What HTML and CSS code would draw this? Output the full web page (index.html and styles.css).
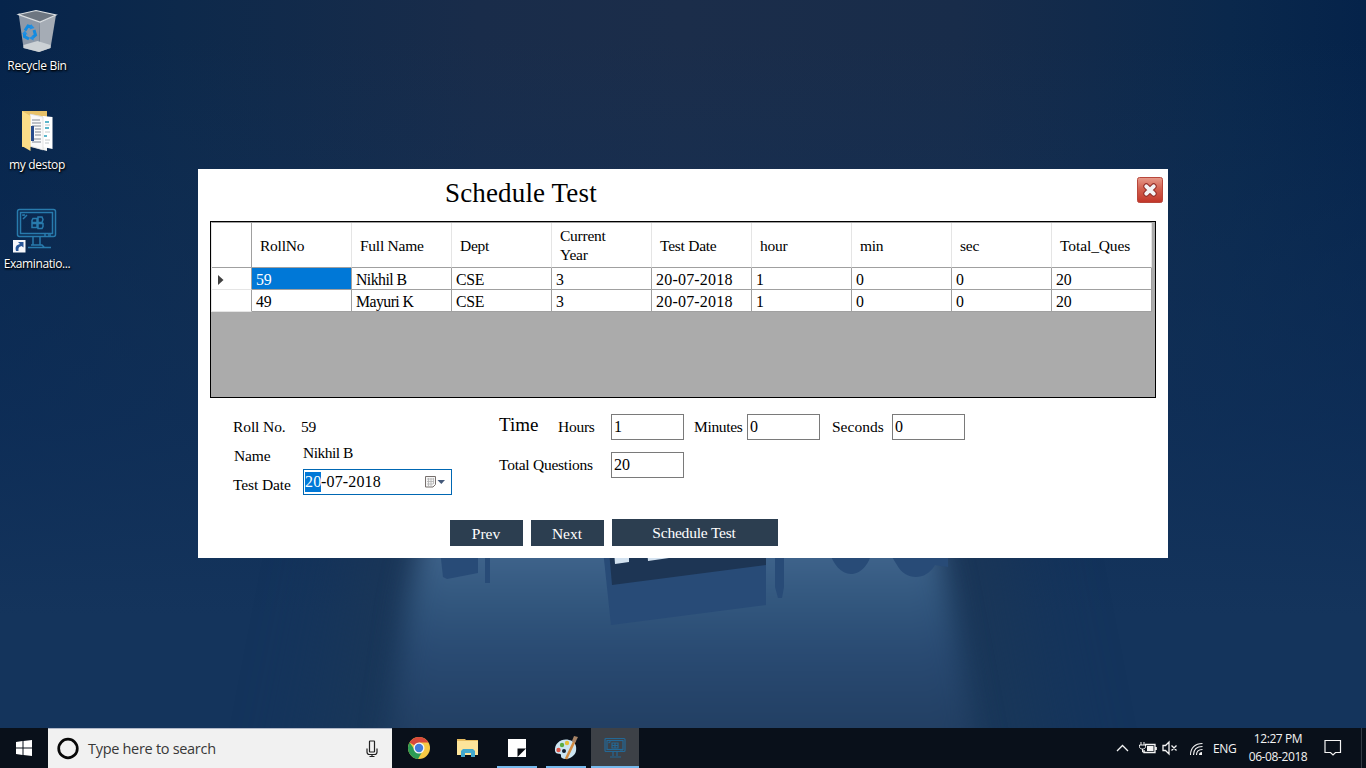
FILE: index.html
```html
<!DOCTYPE html>
<html lang="en">
<head>
<meta charset="utf-8">
<title>Schedule Test</title>
<link rel="stylesheet" href="styles.css">
</head>
<body>
<div class="desktop">
  <svg class="wallpaper" viewBox="0 0 1366 768">
    <defs>
      <linearGradient id="wide" x1="0" y1="0" x2="1" y2="0"><stop offset="0" stop-color="#06244b"/><stop offset=".13" stop-color="#0d294b"/><stop offset=".35" stop-color="#192c4a"/><stop offset=".5" stop-color="#1b2d4a"/><stop offset=".7" stop-color="#182c4a"/><stop offset=".9" stop-color="#0a284c"/><stop offset="1" stop-color="#05234a"/></linearGradient>
      <linearGradient id="low" x1="0" y1="0" x2="0" y2="1"><stop offset=".05" stop-color="#12335b" stop-opacity="0"/><stop offset=".55" stop-color="#10305a" stop-opacity=".75"/><stop offset=".8" stop-color="#14345c"/></linearGradient>
      <linearGradient id="beam" x1="0" y1="540" x2="0" y2="728" gradientUnits="userSpaceOnUse"><stop offset="0" stop-color="#43678f"/><stop offset=".3" stop-color="#33587f"/><stop offset=".6" stop-color="#294a72"/><stop offset="1" stop-color="#223f63"/></linearGradient>
      <linearGradient id="dark" x1="0" y1="540" x2="0" y2="728" gradientUnits="userSpaceOnUse"><stop offset="0" stop-color="#1b3657"/><stop offset="1" stop-color="#193759"/></linearGradient>
      <filter id="soft" x="-30%" y="-30%" width="160%" height="160%" color-interpolation-filters="sRGB"><feGaussianBlur stdDeviation="14"/></filter>
      <filter id="softer" x="-30%" y="-60%" width="160%" height="220%" color-interpolation-filters="sRGB"><feGaussianBlur stdDeviation="38"/></filter>
    </defs>
    <rect width="1366" height="768" fill="url(#wide)"/>
    <rect width="1366" height="768" fill="url(#low)"/>
    <path d="M370 480H996L1070 860H296Z" fill="url(#dark)" filter="url(#softer)"/>
    <path d="M438 470H924L950 600L994 830H376L408 600Z" fill="url(#beam)" filter="url(#soft)"/>
    <g fill="#284b77">
      <path d="M440 550h38v23l-31 6-4-2z"/>
      <path d="M485 550h5v33h-5zM775 550h9v37l-2 11h-4l-3-11zM828 550h44c-2 14-11 24-21 24s-17-9-23-24zM890 550h58v17l-13-2c-10 17-30 15-38 0-3-5-6-9-7-15z"/>
      <path d="M603 550h163v55l-155 20z"/>
    </g>
    <path d="M609 550h157v15l-154 20z" fill="#1d3554"/>
    <path d="M614 550h15v12l-14 2zM647 550h22v8l-21 3z" fill="#d3e2f0"/>
  </svg>

  <div class="shortcut recycle">
    <svg width="48" height="48" viewBox="0 0 48 48">
      <path d="M5.500 5l5 35 15.500 4 1-30z" fill="#8e99a8"/><path d="M27 14l16-7-5.500 33-11.500 4z" fill="#a5acb5"/>
      <path d="M5.500 6.500L23 2.500 43 7 27 14z" fill="#6d7681" stroke="#dce0e3" stroke-width="1.200"/>
      <path d="M10.500 37l14-4 13 4v3L26 44l-15.500-4z" fill="#ccd1d5"/>
      <g fill="none" stroke="#138be0" stroke-width="3"><path d="M12 22.500l3-4.500 3.500 1"/><path d="M21 22l1.500 5-3 2.500"/><path d="M16 31l-4.500-2.500V26"/></g>
      <path d="M18 16l3.500 4-5 1.500zM20.500 27.500L16 30l4.500 2.500zM9 26l3-3.500 2.500 4z" fill="#238fe2"/>
    </svg>
    <span>Recycle Bin</span>
  </div>
  <div class="shortcut folder">
    <svg width="48" height="48" viewBox="0 0 48 48">
      <path d="M9 4h25v36H9z" fill="#e8c269"/><path d="M17 7l17 3v34l-16-4z" fill="#f5f5f2"/>
      <path d="M30 9l9.500 1v32l-9.500-2z" fill="#fff"/><path d="M17 7l13 3v33l-13-4z" fill="#fafafa" stroke="#c8c8c8" stroke-width=".5"/>
      <path d="M19 13h8M19 16h9M19 19h9M22 22h6M22 25h6M22 28h6M19 32h9M19 35h9" stroke="#808894"/>
      <path d="M32 15h4M32 21h4M31 29h3" stroke="#299eba" stroke-width="1.400"/><path d="M32 18h5M32 25h5M32 33h5M32 36h4" stroke="#c2c8ca"/>
      <path d="M18 19h3v15h-3z" fill="#274b8d"/><path d="M9 4l8.500 5v35L9 39z" fill="#fbdd88"/>
    </svg>
    <span>my destop</span>
  </div>
  <div class="shortcut exam">
    <svg width="48" height="48" viewBox="0 0 48 48">
      <g fill="none" stroke="#287bad" stroke-width="1.500">
        <rect x="4.500" y="3.500" width="38" height="27" rx="2"/><rect x="7.500" y="6.500" width="32" height="21"/>
        <path d="M20 31v8M27 31v8M18 39h11l2 2M15 41.500h23M31 29h2M35 29h3M10 13l4-4M10 10V9h2"/>
        <path d="M20 12.500h4v4h-5v-2zM25 11h4l1 2.500-1 3h-4zM19 17.500h5v4h-5zM25 17.500h5v3l-1 2h-4z"/>
      </g>
      <path d="M0 34h12.500v12.500H0z" fill="#f7f8fb"/><path d="M3 45c-1-4 0-6 4-7l-2-2h5.500v5.500l-2-1.500C5.500 41 5.500 42 5.500 45z" fill="#285697"/>
    </svg>
    <span>Examinatio...</span>
  </div>

  <main class="window">
    <header class="titlebar">
      <h1>Schedule Test</h1>
      <svg class="close" width="28" height="28" viewBox="0 0 28 28">
        <defs><linearGradient id="red" x1="0" y1="0" x2="0" y2="1"><stop offset="0" stop-color="#e69a8b"/><stop offset=".45" stop-color="#d2604f"/><stop offset="1" stop-color="#c23528"/></linearGradient></defs>
        <rect x="1.500" y="1.500" width="25" height="25" rx="2" fill="url(#red)" stroke="#b8473b"/>
        <path d="M10.300 10.300l7.400 7.400M17.700 10.300l-7.400 7.400" stroke="#922e29" stroke-width="6" stroke-linecap="round"/>
        <path d="M10.300 10.300l7.400 7.400M17.700 10.300l-7.400 7.400" stroke="#f3f3f5" stroke-width="4" stroke-linecap="round"/>
      </svg>
    </header>

    <div class="datagrid">
      <table>
        <thead><tr><th class="rowhead"></th><th>RollNo</th><th>Full Name</th><th>Dept</th><th>Current<br>Year</th><th>Test Date</th><th>hour</th><th>min</th><th>sec</th><th class="ques">Total_Ques</th></tr></thead>
        <tbody>
          <tr><td class="rowhead"><svg width="6" height="10" viewBox="0 0 6 10"><path d="M0 0l5.500 5L0 10z" fill="#404040"/></svg></td><td class="selected">59</td><td class="word">Nikhil B</td><td>CSE</td><td>3</td><td class="date">20-07-2018</td><td>1</td><td>0</td><td>0</td><td>20</td></tr>
          <tr><td class="rowhead"></td><td>49</td><td class="word">Mayuri K</td><td>CSE</td><td>3</td><td class="date">20-07-2018</td><td>1</td><td>0</td><td>0</td><td>20</td></tr>
        </tbody>
      </table>
    </div>

    <div class="form">
      <section class="person">
        <div class="pair"><label>Roll No.</label><span class="roll">59</span></div>
        <div class="pair name"><label>Name</label><span class="fullname">Nikhil B</span></div>
        <div class="pair test"><label>Test Date</label>
          <div class="picker"><mark>20</mark><span>-07-2018</span>
            <svg width="22" height="14" viewBox="0 0 22 14"><path d="M1.500 1.500h10v8l-2.500 2.500H1.500z" fill="#f6f6f6" stroke="#77706d"/><path d="M3 4h7M3 6.500h7M3 9h6M4.500 3v8M7 3v8M9.500 3v6" stroke="#b3b3b3" stroke-width=".8"/><path d="M13.500 5h7.500l-3.700 4z" fill="#44597a"/></svg>
          </div>
        </div>
      </section>
      <section class="timing">
        <div class="times"><strong>Time</strong><label class="hours">Hours</label><div class="box">1</div><label class="minutes">Minutes</label><div class="box">0</div><label class="seconds">Seconds</label><div class="box">0</div></div>
        <div class="total"><label>Total Questions</label><div class="box">20</div></div>
      </section>
    </div>
    <div class="buttons"><button>Prev</button><button>Next</button><button class="wide">Schedule Test</button></div>
  </main>

  <footer class="taskbar">
    <div class="start"><svg width="16" height="16" viewBox="0 0 16 16"><path d="M0 2l6.500-1v6.500H0zM7.500 1L16 0v7.500H7.500zM0 8.500h6.500V15L0 14zM7.500 8.500H16V16l-8.500-1z" fill="#fff"/></svg></div>
    <div class="search">
      <svg width="24" height="24" viewBox="0 0 24 24"><circle cx="12" cy="11.500" r="9.300" fill="none" stroke="#080808" stroke-width="2.700"/></svg>
      <span>Type here to search</span>
      <svg class="mic" width="14" height="18" viewBox="0 0 14 18" fill="none" stroke="#222" stroke-width="1.200"><rect x="4.500" y="1" width="5" height="11" rx=".5"/><path d="M2 8.500V12c0 1.500 1 2.500 2.500 2.500h5c1.500 0 2.500-1 2.500-2.500V8.500M7 14.500v2M4.500 16.500h5"/></svg>
    </div>
    <nav class="apps">
      <div class="app"><svg width="24" height="24" viewBox="0 0 24 24"><circle cx="12" cy="12" r="11" fill="#f6c944"/><path d="M12 12L2.500 6.500A11 11 0 0 1 21.500 6.500H12z" fill="#d8493b"/><path d="M2.500 6.500A11 11 0 0 0 11 23l5-8.500-8-.5z" fill="#2c9b55"/><circle cx="12" cy="12" r="5.500" fill="#f5f5f5"/><circle cx="12" cy="12" r="4.200" fill="#427bdc"/></svg></div>
      <div class="app"><svg width="24" height="24" viewBox="0 0 24 24"><path d="M1 3h8l1 1h12v15H1z" fill="#e6bc60"/><path d="M1 5h21v14H1z" fill="#fde49a"/><path d="M5 21v-6l2-2h10l2 2v6h-4v-4H9v4z" fill="#41a8ce"/></svg></div>
      <div class="app open"><svg width="24" height="24" viewBox="0 0 24 24"><path d="M3 3h18v18H3z" fill="#fff"/><path d="M12.500 12.500H21L12.500 21z" fill="#080c13"/></svg></div>
      <div class="app open"><svg width="26" height="26" viewBox="0 0 26 26"><path d="M2 16C1 8 9 3 16 5c6 1 8 6 7 11-1 6-10 10-14 7-2-1 0-4-2-4-1-1-4 1-5-3z" fill="#cce5f2"/><circle cx="5.500" cy="15" r="2.200" fill="#dc5547"/><circle cx="9" cy="10" r="2.200" fill="#5cad42"/><circle cx="14" cy="8" r="2.200" fill="#e6bf39"/><circle cx="11" cy="16" r="2" fill="#101c2c"/><path d="M13 24l9-19" stroke="#d28b41" stroke-width="2.600"/><path d="M19 6l2-5 4 1-3 6z" fill="#a78366"/></svg></div>
      <div class="app open active"><svg width="24" height="24" viewBox="0 0 24 24" fill="none" stroke="#236896" stroke-width="1.200"><rect x="2" y="2.500" width="20" height="13" rx="1"/><rect x="4" y="4.500" width="16" height="9"/><path d="M10 16v4M14 16v4M7 21h11M9 7h6v5H9zM12 7v5M9 9.500h6M5.500 7l2-1.500M17 14h3"/></svg></div>
    </nav>
    <div class="tray">
      <svg width="92" height="20" viewBox="0 0 92 20" fill="none" stroke="#f4f4f4" stroke-width="1.300">
        <path d="M1 13l5.500-5.500L12 13"/>
        <path d="M29 6.500h10v8H28v-2.500M40.200 9v3"/><path d="M31 8h6.500v5H31z" fill="#f4f4f4" stroke="none"/><path d="M25 4v3M28 4v3M23.500 7h6v1.500c0 2-1.500 2.500-3 2.500s-3-.5-3-2.500zM26.500 11v3h2" stroke-width="1"/>
        <path d="M47 7.500h2.500L53 4v12l-3.500-3.500H47zM55.500 7.500l5 5M60.500 7.500l-5 5"/>
        <path d="M74.500 17C74.500 10 79 5.500 86.500 5.500M77.500 17c0-5.500 3.500-8.500 9-8.500M80.500 17c0-3.500 2-5.500 6-5.500" stroke-width="1.100"/><path d="M83 17c0-2 1-3 3-3v3z" fill="#f4f4f4" stroke="none"/>
      </svg>
      <span class="lang">ENG</span>
      <div class="clock"><span>12:27 PM</span><span>06-08-2018</span></div>
      <svg class="notice" width="18" height="18" viewBox="0 0 18 18" fill="none" stroke="#f4f4f4" stroke-width="1.200"><path d="M1 1.500h15.500v12h-5L9 16l-2.500-2.500H1z"/></svg>
    </div>
  </footer>
</div>
</body>
</html>
```

FILE: styles.css
```css
* { box-sizing: border-box; }
body { margin: 0; overflow: hidden; font-family: "Liberation Serif", serif; }
svg { display: block; flex: none; }
.desktop { position: relative; width: 1366px; height: 768px; display: flex; flex-direction: column; justify-content: flex-end; overflow: hidden; }
.wallpaper { position: absolute; inset: 0; width: 1366px; height: 768px; }

/* Desktop shortcuts */
.shortcut { position: absolute; left: 0; width: 74px; display: flex; flex-direction: column; align-items: center; gap: 1px; color: #fff; font: 12px/18px "Open Sans", sans-serif; text-shadow: 1px 1px 2px #000, 0 1px 2px #000; white-space: nowrap; letter-spacing: -.3px; }
.recycle { top: 8px; }
.folder { top: 107px; }
.exam { top: 206px; }
.exam span { letter-spacing: -.4px; }

/* Application window */
.window { position: absolute; left: 198px; top: 169px; width: 970px; height: 389px; background: #fff; color: #000; font-size: 15.5px; letter-spacing: -.25px; display: flex; flex-direction: column; }
.titlebar { height: 52px; flex: none; display: flex; justify-content: space-between; padding: 7px 4px 0 247px; }
h1 { margin: 0; font-size: 27px; line-height: 34px; font-weight: 400; letter-spacing: .15px; }
.datagrid { flex: none; margin: 0 12px; height: 177px; border: 1px solid #000; background: #ababab; }
table { table-layout: fixed; width: 941px; border-spacing: 0; border-left: 1px solid #e5e5e5; border-top: 1px solid #a0a0a0; }
th, td { width: 100px; padding: 2px 0 0 4px; text-align: left; font-weight: 400; background: #fff; border-right: 1px solid #a0a0a0; border-bottom: 1px solid #a0a0a0; }
th { height: 45px; line-height: 19px; padding: 0 0 0 8px; border-right-color: #e5e5e5; }
th.ques { letter-spacing: -.1px; }
td { height: 22px; line-height: 19px; font-size: 15.8px; }
th.rowhead, td.rowhead { width: 40px; padding: 2px 0 0 6px; border-right-color: #a0a0a0; }
td.rowhead { border-bottom-color: #e5e5e5; }
td.selected { background: #0078d7; color: #fff; }
td.date { font-size: 16px; letter-spacing: .2px; }
td.word { letter-spacing: -.55px; }

/* Student and timing fields */
.form { flex: none; display: flex; height: 121px; }
.person { width: 301px; padding: 19px 0 0 35px; }
.pair { display: flex; align-items: flex-start; height: 29px; line-height: 20px; }
.pair label { width: 70px; white-space: nowrap; letter-spacing: -.1px; }
.roll { margin-left: -2px; }
.name .fullname { margin-top: -3px; letter-spacing: -.5px; }
.name { padding-left: 1px; }
.name label { width: 69px; }
.picker { margin-top: -6px; width: 149px; height: 26px; border: 1px solid #0067b3; display: flex; align-items: center; padding: 0 5px 0 1px; font-size: 16px; letter-spacing: .15px; }
.picker mark { background: #0078d7; color: #fff; width: 16px; line-height: 20px; }
.picker svg { margin-left: auto; }
.timing { padding-top: 16px; }
.times, .total { display: flex; align-items: center; height: 26px; white-space: nowrap; }
.total { margin-top: 12px; }
.times strong { font-weight: 400; font-size: 19px; letter-spacing: 0; width: 59px; margin-top: -4px; }
.hours { width: 53px; }
.minutes { width: 63px; padding-left: 10px; letter-spacing: -.35px; }
.seconds { width: 72px; padding-left: 12px; letter-spacing: 0; }
.total label { width: 112px; letter-spacing: -.25px; }
.box { width: 73px; height: 26px; border: 1px solid #7a7a7a; padding-left: 2px; line-height: 24px; font-size: 16px; letter-spacing: 0; }
.buttons { display: flex; align-items: flex-end; gap: 8px; padding-left: 252px; height: 27px; }
button { width: 73px; height: 26px; padding: 1px 1px 0 0; border: 0; background: #2c3e50; color: #fff; font: 15.5px/25px "Liberation Serif", serif; }
button.wide { width: 166px; height: 27px; padding: 0 2px 0 0; letter-spacing: -.2px; }

/* Taskbar */
.taskbar { position: relative; height: 40px; background: #09101a; color: #f4f4f4; font-family: "Open Sans", sans-serif; display: flex; align-items: stretch; }
.start { width: 48px; display: grid; place-items: center; }
.search { width: 344px; background: #f1f1f1; border-top: 1px solid #b1b8c8; display: flex; align-items: center; padding: 0 13px 0 8px; color: #383838; font-size: 14.5px; letter-spacing: -.3px; }
.search span { margin-left: 8px; line-height: 20px; white-space: nowrap; }
.mic { margin-left: auto; }
.apps { display: flex; gap: 1px; padding-left: 3px; }
.app { width: 48px; display: grid; place-items: center; }
.open { background: linear-gradient(#76b9ed, #76b9ed) center bottom / 40px 2px no-repeat; }
.active { background: linear-gradient(#76b9ed, #76b9ed) center bottom / 48px 2px no-repeat #3d4147; }
.tray { margin-left: auto; margin-right: 4px; padding-right: 19px; display: flex; align-items: center; font-size: 12px; letter-spacing: -.4px; border-right: 1px solid #333b44; }
.lang { margin-left: 5px; width: 24px; }
.clock { display: flex; flex-direction: column; align-items: center; width: 60px; margin-left: 11px; line-height: 18px; padding-bottom: 1px; white-space: nowrap; }
.notice { margin-left: 16px; }
```
